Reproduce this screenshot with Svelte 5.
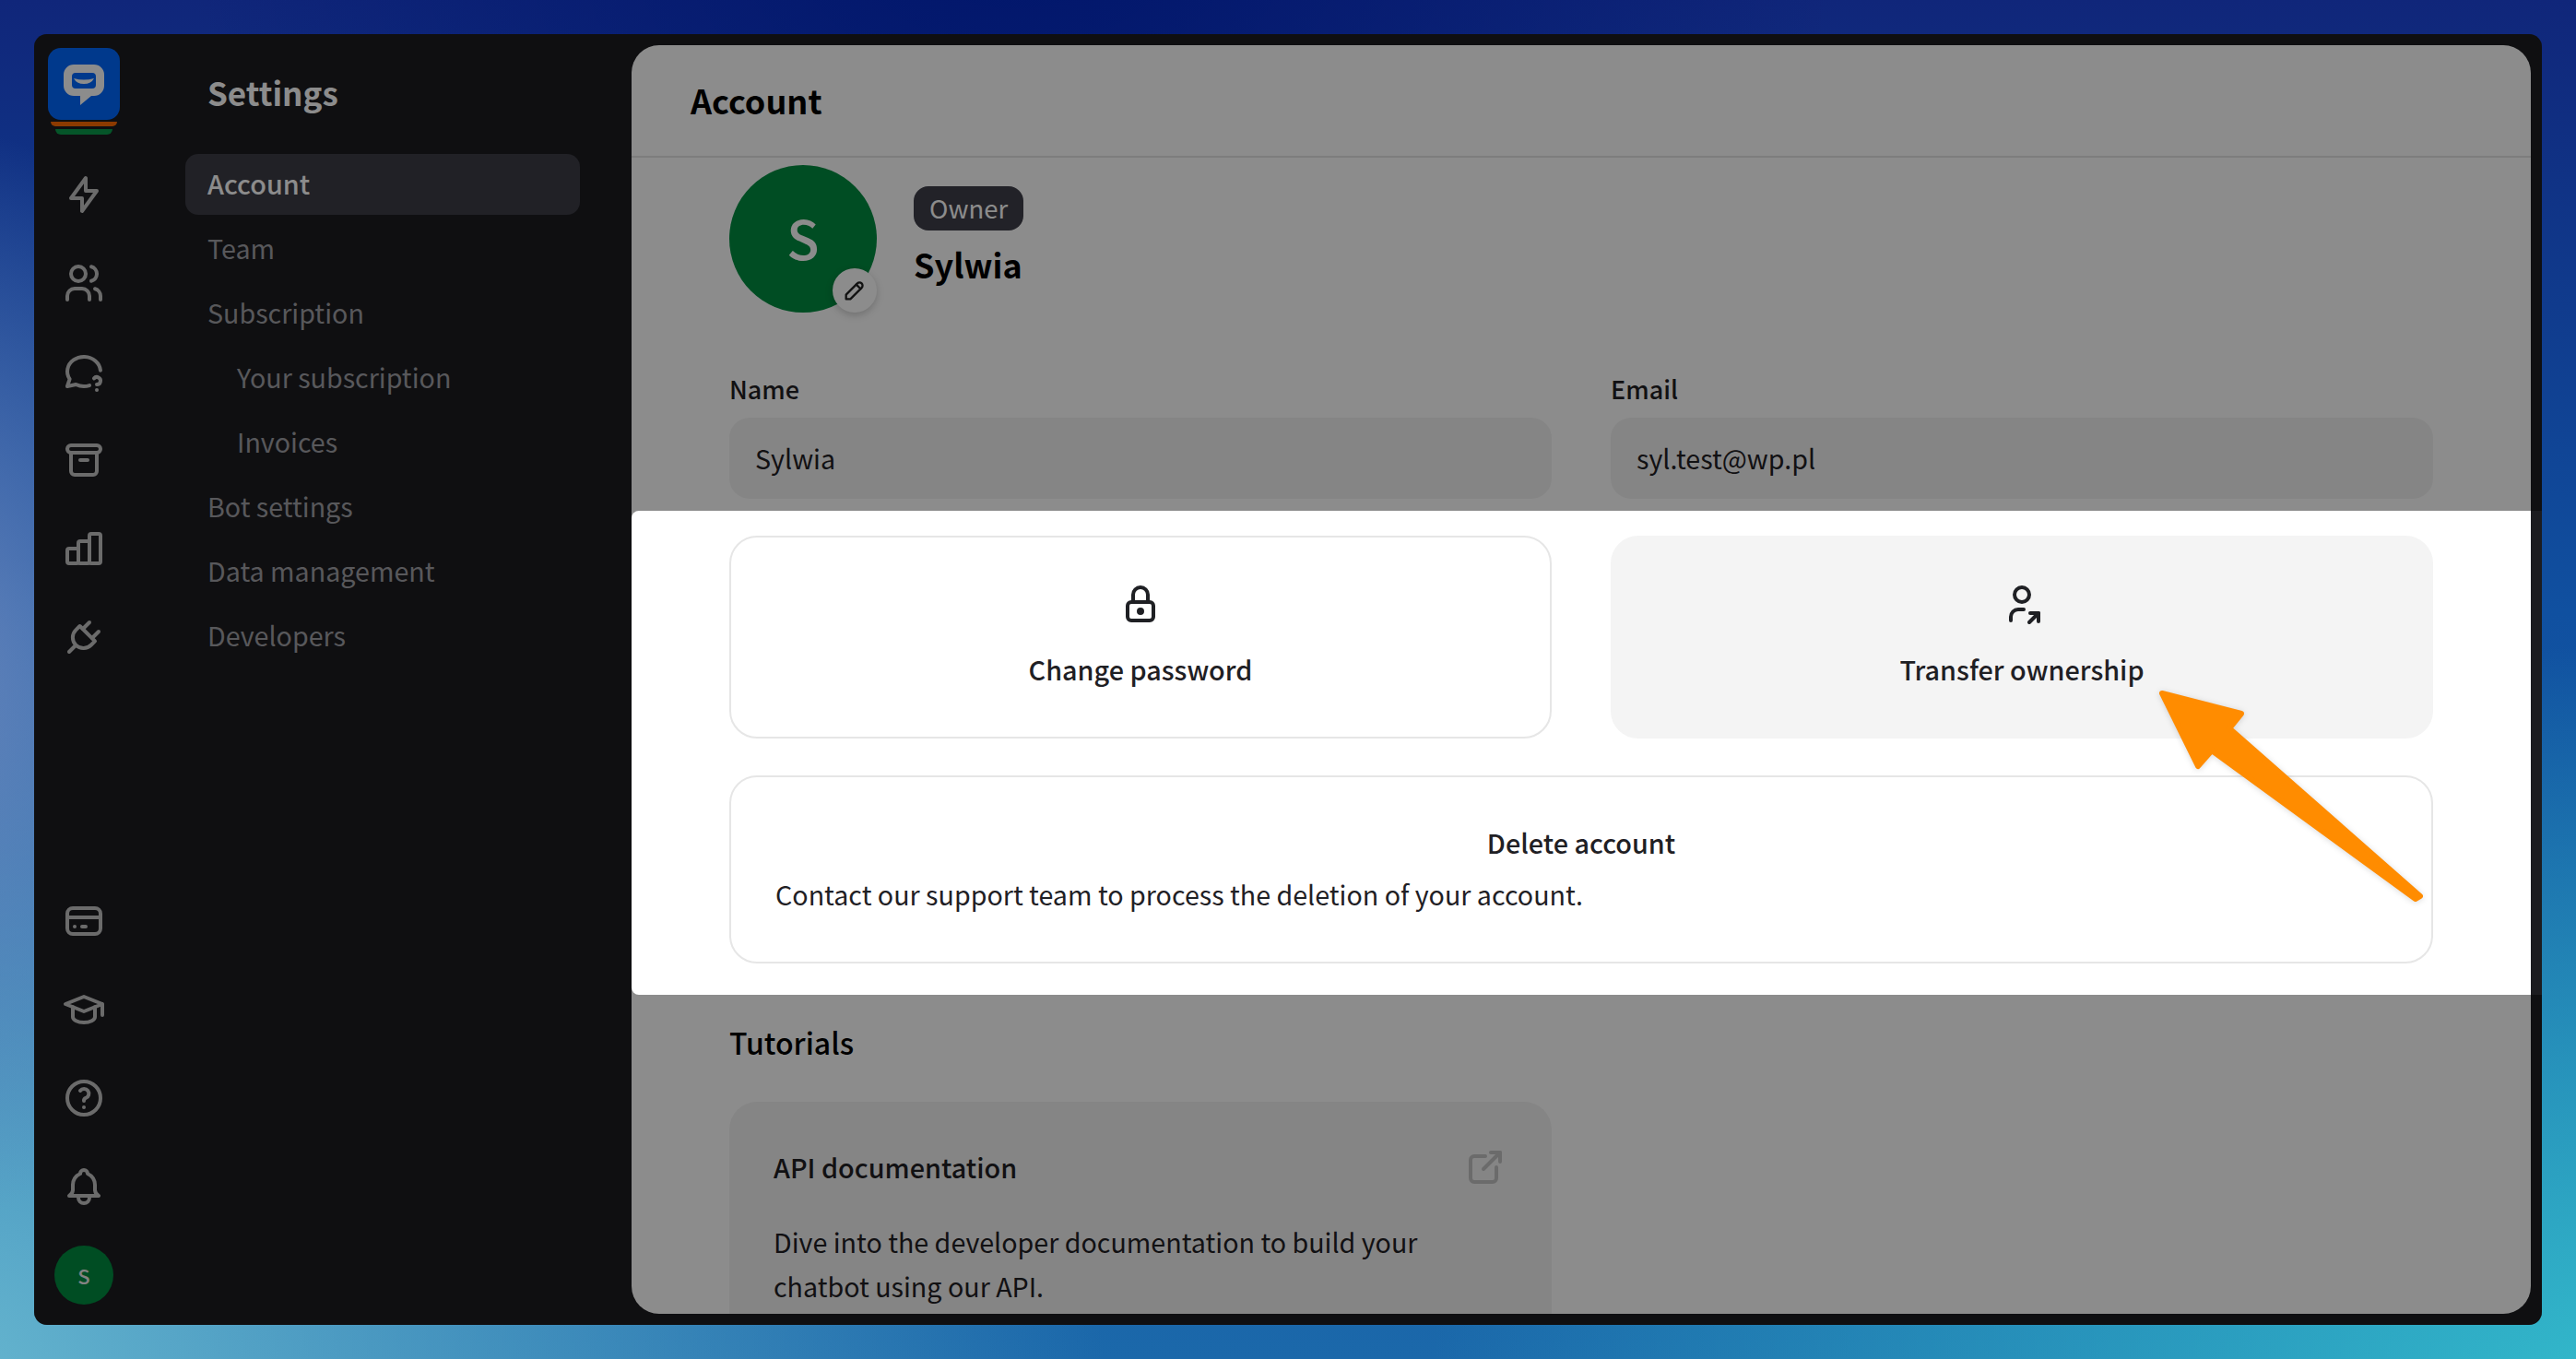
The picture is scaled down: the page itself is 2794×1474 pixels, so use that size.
<script>
  const nav = [
    { label: 'Account', active: true },
    { label: 'Team' },
    { label: 'Subscription' },
    { label: 'Your subscription', sub: true },
    { label: 'Invoices', sub: true },
    { label: 'Bot settings' },
    { label: 'Data management' },
    { label: 'Developers' }
  ];
  const topIcons = [
    ['M13 3v7h6l-8 11v-7H5l8-11z'],
    ['M5 7a4 4 0 1 0 8 0a4 4 0 0 0-8 0', 'M3 21v-2a4 4 0 0 1 4-4h4a4 4 0 0 1 4 4v2', 'M16 3.13a4 4 0 0 1 0 7.75', 'M21 21v-2a4 4 0 0 0-3-3.85'],
    ['M15.02 19.52c-2.341 .736-5 .606-7.32-.52l-4.7 1l1.3-3.9c-2.324-3.437-1.426-7.872 2.1-10.374c3.526-2.501 8.59-2.296 11.845 .48c1.649 1.407 2.575 3.253 2.742 5.152', 'M19 22v.01', 'M19 19a2.003 2.003 0 0 0 .914-3.782a1.98 1.98 0 0 0-2.414 .483'],
    ['M5 4h14a2 2 0 0 1 0 4h-14a2 2 0 0 1 0-4z', 'M5 8v10a2 2 0 0 0 2 2h10a2 2 0 0 0 2-2v-10', 'M10 12h4'],
    ['M3 13a1 1 0 0 1 1-1h4a1 1 0 0 1 1 1v6a1 1 0 0 1-1 1h-4a1 1 0 0 1-1-1z', 'M9 9a1 1 0 0 1 1-1h4a1 1 0 0 1 1 1v10a1 1 0 0 1-1 1h-4a1 1 0 0 1-1-1z', 'M15 5a1 1 0 0 1 1-1h4a1 1 0 0 1 1 1v14a1 1 0 0 1-1 1h-4a1 1 0 0 1-1-1z'],
    ['M9.785 6l8.215 8.215l-2.054 2.054a5.81 5.81 0 1 1-8.215-8.215l2.054-2.054z', 'M4 20l3.5-3.5', 'M15 4l-3.5 3.5', 'M20 9l-3.5 3.5']
  ];
  const bottomIcons = [
    ['M6 5h12a3 3 0 0 1 3 3v8a3 3 0 0 1-3 3h-12a3 3 0 0 1-3-3v-8a3 3 0 0 1 3-3z', 'M3 10h18', 'M7 15h.01', 'M11 15h2'],
    ['M22 9l-10-4l-10 4l10 4l10-4v6', 'M6 10.6v5.4a6 3 0 0 0 12 0v-5.4'],
    ['M3 12a9 9 0 1 0 18 0a9 9 0 0 0-18 0', 'M12 17v.01', 'M12 13.5a1.5 1.5 0 0 1 1-1.5a2.6 2.6 0 1 0-3-4'],
    ['M10 5a2 2 0 1 1 4 0a7 7 0 0 1 4 6v3a4 4 0 0 0 2 3h-16a4 4 0 0 0 2-3v-3a7 7 0 0 1 4-6', 'M9 17v1a3 3 0 0 0 6 0v-1']
  ];
</script>

{#snippet icon(paths, cls)}
  <svg class={cls} viewBox="0 0 24 24" fill="none" stroke="currentColor" stroke-width="2" stroke-linecap="round" stroke-linejoin="round">
    {#each paths as d}<path {d} />{/each}
  </svg>
{/snippet}

<div class="window">
  <aside class="rail">
    <div class="logo">
      <div class="tile">
        <svg viewBox="0 0 44 44" class="logo-mark">
          <path fill-rule="evenodd" fill="#fff" d="M11 0h22a11 11 0 0 1 11 11v12a11 11 0 0 1-11 11h-3l-12 10v-10h-7a11 11 0 0 1-11-11v-12a11 11 0 0 1 11-11z M13 9h18a4 4 0 0 1 4 4v9a4 4 0 0 1-4 4h-18a4 4 0 0 1-4-4v-9a4 4 0 0 1 4-4z" />
          <path fill="#fff" d="M11 15q11 3 22 0q-3 6-11 6q-8 0-11-6z" />
        </svg>
      </div>
      <div class="strip orange"></div>
      <div class="strip green"></div>
    </div>
    {#each topIcons as p}
      <div class="slot">{@render icon(p, 'i48')}</div>
    {/each}
    <div class="spacer"></div>
    {#each bottomIcons as p}
      <div class="slot">{@render icon(p, 'i48')}</div>
    {/each}
    <div class="slot"><div class="mini-avatar">S</div></div>
  </aside>

  <nav class="side">
    <h2>Settings</h2>
    <ul>
      {#each nav as n}
        <li class:active={n.active} class:sub={n.sub}>{n.label}</li>
      {/each}
    </ul>
  </nav>

  <main>
    <header><h1>Account</h1></header>
    <div class="scroll">
      <section class="profile">
        <div class="avatar">
          S
          <span class="edit">
            {@render icon(['M4 20h4l10.5-10.5a2.828 2.828 0 1 0-4-4l-10.5 10.5v4', 'M13.5 6.5l4 4'], 'i28')}
          </span>
        </div>
        <div class="who">
          <span class="badge">Owner</span>
          <strong>Sylwia</strong>
        </div>
      </section>

      <section class="two fields">
        <label>Name<span class="input">Sylwia</span></label>
        <label>Email<span class="input">syl.test@wp.pl</span></label>
      </section>

      <section class="two actions">
        <div class="card action">
          <svg class="i48" viewBox="0 0 24 24" fill="none" stroke="currentColor" stroke-width="2" stroke-linecap="round" stroke-linejoin="round">
            <path d="M7 11h10a2 2 0 0 1 2 2v6a2 2 0 0 1-2 2h-10a2 2 0 0 1-2-2v-6a2 2 0 0 1 2-2z" />
            <path d="M11 16a1 1 0 1 0 2 0a1 1 0 0 0-2 0" />
            <path d="M8 11v-4a4 4 0 1 1 8 0v4" />
          </svg>
          <span>Change password</span>
        </div>
        <div class="card action hover">
          {@render icon(['M8 7a4 4 0 1 0 8 0a4 4 0 0 0-8 0', 'M6 21v-2a4 4 0 0 1 4-4h3', 'M16 22l5-5', 'M21 21.5v-4.5h-4.5'], 'i48')}
          <span>Transfer ownership</span>
        </div>
      </section>

      <section class="card del">
        <h3>Delete account</h3>
        <p>Contact our support team to process the deletion of your account.</p>
      </section>

      <h2 class="tut">Tutorials</h2>
      <section class="two">
        <div class="api">
          <div class="api-head">
            <h3>API documentation</h3>
            {@render icon(['M12 6h-6a2 2 0 0 0-2 2v10a2 2 0 0 0 2 2h10a2 2 0 0 0 2-2v-6', 'M11 13l9-9', 'M15 4h5v5'], 'i48 ext')}
          </div>
          <p>Dive into the developer documentation to build your chatbot using our API.</p>
        </div>
      </section>
    </div>
  </main>

  <div class="spotlight"></div>
  <svg class="arrow" viewBox="0 0 300 240">
    <polygon points="11,9 97,31 84,47 291,229 286,232 65,71 50,88" fill="#ff8c00" stroke="#ff8c00" stroke-width="6" stroke-linejoin="round" />
  </svg>
</div>

<style>
  :global(html), :global(body) { margin: 0; height: 100%; overflow: hidden; }
  :global(body) {
    font-family: "Noto Sans CJK SC", "Noto Sans", sans-serif;
    background:
      radial-gradient(500px 600px at -120px 730px, #6a86bc 0%, rgba(106, 134, 188, 0) 100%),
      radial-gradient(900px 700px at 1100px -100px, #00156a 0%, rgba(0, 21, 106, 0) 100%),
      radial-gradient(1300px 900px at -100px 1500px, #68b8d0 0%, rgba(104, 184, 208, 0) 100%),
      radial-gradient(1300px 800px at 2850px 1500px, #33bacb 0%, rgba(51, 186, 203, 0) 100%),
      linear-gradient(180deg, #10267a 0%, #1050a0 45%, #1b68aa 100%);
  }
  h1, h2, h3, p, ul { margin: 0; padding: 0; }
  .window {
    position: absolute; left: 37px; top: 37px; width: 2720px; height: 1400px;
    background: #1c1c20; border-radius: 14px; overflow: hidden; display: flex;
  }
  .i48 { width: 48px; height: 48px; display: block; }
  .i28 { width: 28px; height: 28px; display: block; }

  .rail { width: 108px; flex: none; display: flex; flex-direction: column; align-items: center; padding: 15px 0 6px; box-sizing: border-box; color: #c4c4c4; }
  .logo { width: 78px; height: 94px; margin-bottom: 17px; display: flex; flex-direction: column; align-items: center; }
  .tile { width: 78px; height: 78px; flex: none; border-radius: 14px; background: #0069ff; display: flex; align-items: center; justify-content: center; }
  .logo-mark { width: 44px; height: 44px; display: block; margin-top: 2px; }
  .strip { flex: none; }
  .orange { width: 72px; height: 5px; margin-top: 2px; background: #ff6a00; border-radius: 0 0 10px 10px; }
  .green { width: 62px; height: 6px; margin-top: 3px; background: #0a9c4c; border-radius: 0 0 10px 10px; }
  .slot { width: 96px; height: 96px; flex: none; display: flex; align-items: center; justify-content: center; }
  .spacer { flex: 1; }
  .mini-avatar { width: 64px; height: 64px; border-radius: 50%; background: #008c40; color: #eee; display: flex; align-items: center; justify-content: center; font-size: 22px; font-weight: 500; }

  .side { width: 540px; flex: none; box-sizing: border-box; padding: 0 56px; color: #a0a0a6; }
  .side h2 { font-size: 35px; line-height: 56px; font-weight: 600; color: #fff; margin: 35px 0 39px 24px; }
  .side ul { list-style: none; display: flex; flex-direction: column; gap: 4px; }
  .side li { height: 66px; line-height: 64px; font-size: 28.65px; padding-left: 24px; border-radius: 14px; }
  .side li.sub { padding-left: 56px; }
  .side li.active { background: #3c3c45; color: #fff; font-weight: 500; font-size: 28.8px; }

  main { flex: 1; min-width: 0; margin: 12px 12px 12px 0; background: #fff; border-radius: 30px; overflow: hidden; color: #1f2024; }
  header { height: 122px; box-sizing: border-box; padding: 0 64px 3px; border-bottom: 2px solid #e4e4e4; display: flex; align-items: center; }
  h1 { font-size: 36px; font-weight: 700; color: #000; }
  .scroll { padding: 8px 106px 0; }
  .profile { display: flex; align-items: center; gap: 40px; margin-bottom: 63px; }
  .avatar { position: relative; box-sizing: border-box; width: 160px; height: 160px; padding-bottom: 4px; border-radius: 50%; background: #008c40; color: #fff; display: flex; align-items: center; justify-content: center; font-size: 58px; font-weight: 500; }
  .edit { position: absolute; right: 0; bottom: 0; width: 48px; height: 48px; border-radius: 50%; background: #fff; color: #222; display: flex; align-items: center; justify-content: center; box-shadow: 0 3px 8px rgba(0, 0, 0, .2); }
  .who { display: flex; flex-direction: column; align-items: flex-start; gap: 12px; margin-bottom: 7px; }
  .badge { height: 48px; line-height: 46px; padding: 0 17px; border-radius: 16px; background: #3e3e49; color: #fff; font-size: 27.5px; font-weight: 400; }
  .who strong { font-size: 36px; line-height: 48px; font-weight: 700; color: #000; }
  .two { display: grid; grid-template-columns: 892px 892px; gap: 64px; }
  label { display: flex; flex-direction: column; gap: 11px; font-size: 27px; line-height: 40px; font-weight: 500; }
  .input { height: 88px; line-height: 87px; padding-left: 28px; border-radius: 22px; background: #f3f3f3; font-size: 28.65px; font-weight: 400; }
  .actions { margin-top: 40px; }
  .card { box-sizing: border-box; border: 2px solid #e6e6e6; border-radius: 30px; background: #fff; }
  .action { height: 220px; padding-top: 48px; display: flex; flex-direction: column; align-items: center; gap: 27px; font-size: 28.8px; line-height: 40px; font-weight: 500; }
  .hover { background: #f4f4f4; border-color: #f4f4f4; }
  .del { margin-top: 40px; height: 204px; padding: 51px 48px 0; }
  .del h3 { text-align: center; font-size: 28.8px; line-height: 40px; font-weight: 500; }
  .del p { margin-top: 16px; font-size: 28.65px; line-height: 40px; }
  .tut { margin: 63px 0 43px; font-size: 32px; line-height: 44px; font-weight: 500; color: #000; }
  .api { background: #f3f3f3; border-radius: 30px; padding: 47px 48px 60px 48px; }
  .api-head { display: flex; align-items: center; justify-content: space-between; }
  .api-head h3 { font-size: 28.8px; line-height: 48px; font-weight: 500; }
  .api :global(.ext) { color: #c4c4c4; }
  .api p { margin-top: 33px; max-width: 760px; font-size: 28.65px; line-height: 48px; }

  .spotlight { position: absolute; left: 648px; top: 517px; width: 2100px; height: 525px; border-radius: 8px; box-shadow: 0 0 0 4000px rgba(0, 0, 0, .45); pointer-events: none; }
  .arrow { position: absolute; left: 2297px; top: 706px; width: 300px; height: 240px; overflow: visible; filter: drop-shadow(0 1px 3px rgba(0, 0, 0, .15)); }
</style>
